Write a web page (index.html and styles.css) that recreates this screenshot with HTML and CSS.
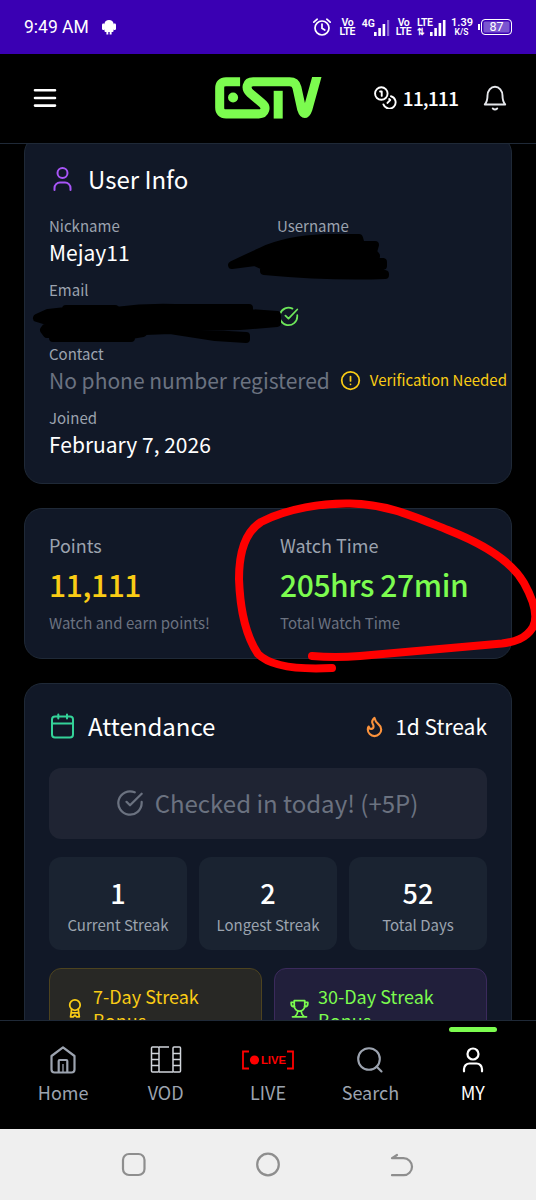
FILE: index.html
```
<!DOCTYPE html>
<html lang="en">
<head>
    <meta charset="UTF-8">
    <meta name="viewport" content="width=device-width, initial-scale=1.0">
    <title>ESTV - My Page</title>
    <link rel="stylesheet" href="styles.css">
</head>
<body>
    <div class="phone">
        <!-- Status Bar -->
        <div class="status-bar">
            <span class="clock">9:49 AM</span>
            <svg class="android" width="14" height="16" viewBox="0 0 14 16" fill="#fff">
                <path d="M2.500 4.500Q3 1 7 1T11.500 4.500V12Q11.500 13 10.500 13H9.600V15.500H7.700V13H6.300V15.500H4.400V13H3.500Q2.500 13 2.500 12Z"/>
                <rect x="0" y="4.500" width="3" height="6.500" rx="1.200"/>
                <rect x="11" y="4.500" width="3" height="6.500" rx="1.200"/>
            </svg>
            <div class="status-icons">
                <svg class="alarm" width="20" height="20" viewBox="0 0 20 20" fill="none" stroke="#fff" stroke-width="1.700" stroke-linecap="round">
                    <circle cx="10" cy="11" r="7"/>
                    <path d="M10 7v4.300l2.800 1.700M1.800 5.200l3.400-3M18.200 5.200l-3.400-3"/>
                </svg>
                <span class="two-line volte">Vo<br>LTE</span>
                <span class="net">4G</span>
                <svg class="bars" width="17" height="17" viewBox="0 0 17 17" fill="#fff">
                    <rect x="1" y="13" width="2.600" height="4"/>
                    <rect x="5.300" y="9" width="2.600" height="8"/>
                    <rect x="9.600" y="5" width="2.600" height="12"/>
                    <rect x="14" y="1" width="2.200" height="16" opacity=".4"/>
                </svg>
                <span class="two-line volte second">Vo<br>LTE</span>
                <span class="two-line lte">LTE<br><small>⇅</small></span>
                <svg class="bars tight" width="17" height="17" viewBox="0 0 17 17" fill="#fff">
                    <rect x="1" y="13" width="2.600" height="4"/>
                    <rect x="5.300" y="9" width="2.600" height="8"/>
                    <rect x="9.600" y="4" width="2.600" height="13"/>
                    <rect x="13.900" y="1" width="2.600" height="16"/>
                </svg>
                <span class="two-line speed">1.39<br><small>K/S</small></span>
                <span class="battery">87</span>
            </div>
        </div>

        <!-- Header -->
        <header class="header">
            <svg class="menu" width="24" height="20" viewBox="0 0 24 20" stroke="#fff" stroke-width="2.600" stroke-linecap="round">
                <path d="M2 2.300h20M2 10h20M2 17.600h20"/>
            </svg>
            <svg class="logo" width="107" height="42" viewBox="43 37 320 125" fill="none" stroke="#7cfc4f" stroke-width="27" role="img" aria-label="ESTV">
                <path d="M118 51H76Q57 51 57 70V128Q57 147 76 147H174C193 147 199 127 184 115L149 86C132 70 138 51 157 51H266Q284 51 288 68L302 132Q311 160 321 132L351 24"/>
                <path d="M232 78V161"/>
                <circle cx="97" cy="98" r="15" fill="#7cfc4f" stroke="none"/>
            </svg>
            <div class="header-right">
                <svg class="coins" width="23" height="23" viewBox="0 0 22 22" fill="none" stroke="#fff" stroke-width="1.800" stroke-linecap="round" stroke-linejoin="round">
                    <circle cx="7" cy="7.200" r="6"/>
                    <path d="M16.200 9.800a6 6 0 1 1-7.200 7.800M5.800 5.200h1.600v4.300M14.500 12.500l1 .900-2.600 2.800"/>
                </svg>
                <span class="balance">11,111</span>
                <svg class="bell" width="24" height="26" viewBox="0 0 24 26" fill="none" stroke="#e5e7eb" stroke-width="1.900" stroke-linecap="round" stroke-linejoin="round">
                    <path d="M1.800 19.500C4 17 4.500 14.500 4.500 10.500a7.500 8.800 0 0 1 15 0C19.500 14.500 20 17 22.200 19.500Z"/>
                    <path d="M9.800 23.500q2.200 2 4.400 0"/>
                </svg>
            </div>
        </header>

        <main class="content">
            <!-- User Info -->
            <section class="card user-card">
                <div class="card-head">
                    <svg class="head-icon" width="26" height="26" viewBox="0 0 26 26" fill="none" stroke="#a855f7" stroke-width="2" stroke-linecap="round">
                        <circle cx="13.500" cy="7" r="5"/>
                        <path d="M5.500 24v-2a5.500 5.500 0 0 1 5.500-5.500h5a5.500 5.500 0 0 1 5.500 5.500v2"/>
                    </svg>
                    <h2>User Info</h2>
                </div>
                <div class="info-grid">
                    <div class="field">
                        <div class="label">Nickname</div>
                        <div class="value">Mejay11</div>
                    </div>
                    <div class="field">
                        <div class="label">Username</div>
                        <div class="value"></div>
                    </div>
                    <div class="field wide">
                        <div class="label">Email</div>
                        <div class="value email">
                            <svg width="21" height="21" viewBox="0 0 24 24" fill="none" stroke="#6ee75a" stroke-width="2" stroke-linecap="round" stroke-linejoin="round">
                                <path d="M22 10.500V12A10 10 0 1 1 16.500 3M8.500 11l3.500 3.500L22 4"/>
                            </svg>
                        </div>
                    </div>
                    <div class="field wide">
                        <div class="label">Contact</div>
                        <div class="value contact">
                            <span class="muted">No phone number registered</span>
                            <svg width="21" height="21" viewBox="0 0 24 24" fill="none" stroke="#facc15" stroke-width="2" stroke-linecap="round">
                                <circle cx="12" cy="12" r="10"/>
                                <path d="M12 7.500v5M12 16.300v.1"/>
                            </svg>
                            <span class="verify">Verification Needed</span>
                        </div>
                    </div>
                    <div class="field wide">
                        <div class="label">Joined</div>
                        <div class="value">February 7, 2026</div>
                    </div>
                </div>
            </section>

            <!-- Points and Watch Time -->
            <section class="card totals">
                <div>
                    <div class="total-label">Points</div>
                    <div class="total-value yellow">11,111</div>
                    <div class="total-note">Watch and earn points!</div>
                </div>
                <div>
                    <div class="total-label">Watch Time</div>
                    <div class="total-value green">205hrs 27min</div>
                    <div class="total-note">Total Watch Time</div>
                </div>
            </section>

            <!-- Attendance -->
            <section class="card attendance">
                <div class="card-head">
                    <svg class="head-icon" width="26" height="26" viewBox="0 0 26 26" fill="none" stroke="#34d399" stroke-width="2" stroke-linecap="round">
                        <rect x="3" y="3.500" width="21" height="21" rx="3"/>
                        <path d="M3 10.500h21M9.300 1.500v4M18 1.500v4"/>
                    </svg>
                    <h2>Attendance</h2>
                    <svg class="flame" width="23" height="23" viewBox="0 0 24 24" fill="none" stroke="#fb923c" stroke-width="2.200" stroke-linecap="round" stroke-linejoin="round">
                        <path d="M8.500 14.500A2.500 2.500 0 0 0 11 12c0-1.380-.5-2-1-3-1.072-2.143-.224-4.054 2-6 .5 2.500 2 4.900 4 6.500 2 1.600 3 3.500 3 5.500a7 7 0 1 1-14 0c0-1.153.433-2.294 1-3a2.500 2.500 0 0 0 2.500 2.500z"/>
                    </svg>
                    <span class="streak">1d Streak</span>
                </div>
                <button class="checkin" disabled>
                    <svg width="28" height="28" viewBox="0 0 24 24" fill="none" stroke="#6b7280" stroke-width="1.900" stroke-linecap="round" stroke-linejoin="round">
                        <path d="M22 11.080V12a10 10 0 1 1-5.930-9.140M9 11l3 3L22 4"/>
                    </svg>
                    Checked in today! (+5P)
                </button>
                <div class="stats">
                    <div class="stat"><b>1</b><span>Current Streak</span></div>
                    <div class="stat"><b>2</b><span>Longest Streak</span></div>
                    <div class="stat"><b>52</b><span>Total Days</span></div>
                </div>
                <div class="bonuses">
                    <div class="bonus gold">
                        <svg width="21" height="21" viewBox="0 0 24 24" fill="none" stroke="#facc15" stroke-width="2" stroke-linecap="round" stroke-linejoin="round">
                            <circle cx="12.500" cy="8" r="6"/>
                            <path d="M8.700 13L7.500 21.500h3l2-2 2 2h3L16.300 13M8.500 17h8"/>
                        </svg>
                        <span>7-Day Streak Bonus</span>
                    </div>
                    <div class="bonus violet">
                        <svg width="21" height="21" viewBox="0 0 24 24" fill="none" stroke="#7cfc4f" stroke-width="2" stroke-linecap="round" stroke-linejoin="round">
                            <path d="M6 3h12v6a6 6 0 0 1-12 0zM6 5H2.500v1.500Q2.500 10 6.500 10M18 5h3.500v1.500Q21.500 10 17.500 10M10 15q0 3-3 6M14 15q0 3 3 6M4 21.500h16"/>
                        </svg>
                        <span>30-Day Streak Bonus</span>
                    </div>
                </div>
            </section>
        </main>

        <!-- Bottom Navigation -->
        <nav class="tabs">
            <a class="tab">
                <svg width="30" height="30" viewBox="0 0 30 30" fill="none" stroke="#9ca3af" stroke-width="2.200" stroke-linejoin="round">
                    <path d="M3.500 11L15 2.300 26.500 11V24.500Q26.500 27.500 23.500 27.500H6.500Q3.500 27.500 3.500 24.500ZM10.700 27V16Q10.700 15 11.700 15H18.300Q19.300 15 19.300 16V27"/>
                    <path d="M15 19v8" stroke-width="1.300"/>
                </svg>
                <span>Home</span>
            </a>
            <a class="tab">
                <svg width="32" height="30" viewBox="0 0 32 30" fill="none" stroke="#d1d5db" stroke-width="1.500">
                    <rect x="1.500" y="2" width="7.500" height="25" rx="1"/>
                    <rect x="23" y="2" width="7.500" height="25" rx="1"/>
                    <path d="M9 2h10M9 27h14M1.500 8.500h7.500M1.500 14.500h7.500M1.500 20.500h7.500M23 8.500h7.500M23 14.500h7.500M23 20.500h7.500"/>
                </svg>
                <span>VOD</span>
            </a>
            <a class="tab">
                <svg class="live" width="54" height="30" viewBox="0 0 54 30">
                    <path d="M8 6.500H2V23.500H8M46 6.500h6V23.500H46" fill="none" stroke="#ff0000" stroke-width="1.800"/>
                    <circle cx="13.500" cy="15" r="4.600" fill="#ff0000"/>
                    <text x="20" y="19" textLength="25" lengthAdjust="spacingAndGlyphs">LIVE</text>
                </svg>
                <span>LIVE</span>
            </a>
            <a class="tab">
                <svg width="30" height="30" viewBox="0 0 30 30" fill="none" stroke="#9ca3af" stroke-width="2.100" stroke-linecap="round">
                    <circle cx="14" cy="14" r="10.800"/>
                    <path d="M21.500 21.500l5 5"/>
                </svg>
                <span>Search</span>
            </a>
            <a class="tab active">
                <svg width="30" height="30" viewBox="0 0 30 30" fill="none" stroke="#fff" stroke-width="2.200" stroke-linecap="round">
                    <circle cx="15" cy="9" r="5.500"/>
                    <path d="M6 26.300V24a5.500 5.500 0 0 1 5.500-5.500h7A5.500 5.500 0 0 1 24 24v2.300"/>
                </svg>
                <span>MY</span>
            </a>
        </nav>

        <!-- System Buttons -->
        <div class="system-bar">
            <svg width="26" height="26" viewBox="0 0 26 26"><rect x="2" y="2" width="21.500" height="21" rx="6"/></svg>
            <svg width="26" height="26" viewBox="0 0 26 26"><circle cx="13" cy="12.500" r="10.800"/></svg>
            <svg width="26" height="26" viewBox="0 0 26 26"><path d="M3 6.200H14.500a8 8 0 0 1 0 17H3M3 6.200L8 3"/></svg>
        </div>

        <!-- Hand-drawn marks over the page -->
        <svg class="marks" width="536" height="1200" viewBox="0 0 536 1200" fill="none" stroke-linecap="round" stroke-linejoin="round">
            <g stroke="#000" stroke-width="8" fill="#000">
                <path d="M232 265L262 251Q285 240 325 238H359L361 245H375L373 252L376 256L375 261L383 262V266L370 270L385 274V275Q330 277 264 271V266L255 262Z"/>
                <path d="M37 318L48 313L66 311V309H115V311Q145 307 175 308L249 308V313L277 315V323L240 326L186 327L210 334L246 336V339L215 337L170 330L145 331L143 333L131 335V338H53V334H47L44 330L50 322Z"/>
            </g>
            <path d="M332 668Q275 671 258 654C246 636 240 608 239 579C239 553 245 532 261 522C288 508 323 503 350 503.500C388 504 415 517 448 530C486 545 512 562 524 583C534 601 538 617 533 627C526 639 514 642 502 643.500L360 656Q335 658 312 656" stroke="#ff0000" stroke-width="8"/>
        </svg>
    </div>
</body>
</html>
```
FILE: styles.css
```
* {
    box-sizing: border-box;
}

body {
    margin: 0;
    background: #000;
    color: #fff;
    font-family: "Noto Sans CJK KR", "Noto Sans", sans-serif;
}

svg {
    flex-shrink: 0;
}

.phone {
    position: relative;
    width: 536px;
    height: 1200px;
    overflow: hidden;
    display: flex;
    flex-direction: column;
}

/* Status bar */
.status-bar {
    height: 54px;
    flex-shrink: 0;
    background: #3a00b3;
    display: flex;
    align-items: center;
    padding: 0 24px;
    font-family: Roboto, sans-serif;
}

.clock {
    font-size: 17.5px;
    width: 66px;
    white-space: nowrap;
}

.android {
    margin-left: 12px;
}

.status-icons {
    margin-left: auto;
    display: flex;
    align-items: center;
}

.two-line {
    font-size: 10.5px;
    line-height: 9px;
    font-weight: 600;
    text-align: center;
    white-space: nowrap;
}

.two-line small {
    font-size: 8.5px;
}

.volte {
    margin-left: 7px;
    width: 17px;
    letter-spacing: -0.4px;
}

.volte.second {
    margin-left: 5px;
}

.net {
    font-size: 10.5px;
    font-weight: 600;
    margin: 0 -2px 8px 6px;
}

.lte {
    margin-left: 5px;
    text-align: left;
    width: 17px;
    letter-spacing: -0.4px;
}

.bars.tight {
    margin-left: -5px;
}

.speed {
    margin-left: 5px;
    width: 21px;
    font-size: 11px;
}

.battery {
    position: relative;
    margin-left: 9px;
    width: 31px;
    height: 16px;
    border: 1.5px solid #fff;
    border-radius: 4px;
    background: #7a55d0;
    box-shadow: inset 0 0 0 1.5px #3a00b3;
    font-size: 12.5px;
    line-height: 14px;
    text-align: center;
}

.battery::before {
    content: "";
    position: absolute;
    left: -4px;
    top: 4px;
    width: 2px;
    height: 6px;
    background: #fff;
}

/* Header */
.header {
    height: 90px;
    flex-shrink: 0;
    display: grid;
    grid-template-columns: 1fr 107px 1fr;
    align-items: center;
    padding: 0 29px 2px 33px;
    border-bottom: 1px solid #1f2937;
}

.logo {
    margin-left: -2px;
}

.header-right {
    display: flex;
    align-items: center;
    justify-content: flex-end;
}

.balance {
    margin: 0 25px 0 6px;
    font-size: 19.5px;
    font-weight: 500;
    line-height: 28px;
    letter-spacing: -1px;
}

/* Cards */
.content {
    flex: 1;
    min-height: 0;
    overflow: hidden;
    padding: 0 24px;
}

.card {
    border: 1px solid #1f2937;
    border-radius: 18px;
    background: #111827;
    padding: 24px;
    margin-bottom: 24px;
}

.user-card {
    margin-top: -9px;
}

.card-head {
    display: flex;
    align-items: center;
    height: 38px;
}

.card-head h2 {
    margin: 0 0 0 13px;
    font-size: 24px;
    font-weight: 400;
    line-height: 38px;
}

.info-grid {
    display: grid;
    grid-template-columns: 1fr 1fr;
    gap: 12px 18px;
    margin-top: 17px;
}

.wide {
    grid-column: span 2;
}

.label {
    font-size: 15px;
    line-height: 22px;
    color: #9ca3af;
}

.value {
    height: 30px;
    font-size: 21px;
    line-height: 30px;
    white-space: nowrap;
}

.email,
.contact {
    display: flex;
    align-items: center;
}

.email {
    padding-left: 229px;
}

.muted {
    color: #6b7280;
    margin-right: 10px;
}

.verify {
    margin-left: 9px;
    font-size: 15px;
    color: #facc15;
}

/* Points and watch time */
.totals {
    display: grid;
    grid-template-columns: 1fr 1fr;
    gap: 24px;
    height: 151px;
    padding-top: 23px;
}

.total-label {
    font-size: 18px;
    line-height: 27px;
    color: #9ca3af;
}

.total-value {
    margin-top: 5px;
    font-size: 30px;
    font-weight: 500;
    line-height: 40px;
    letter-spacing: -0.4px;
    white-space: nowrap;
}

.total-note {
    margin-top: 8px;
    font-size: 15px;
    line-height: 22px;
    color: #6b7280;
}

.yellow {
    color: #facc15;
}

.green {
    color: #7cfc4f;
}

/* Attendance */
.attendance {
    padding-top: 23px;
}

.flame {
    margin-left: auto;
}

.streak {
    margin-left: 9px;
    font-size: 21px;
    line-height: 30px;
}

.checkin {
    width: 100%;
    height: 71px;
    margin-top: 23px;
    padding: 0 6px 2px;
    border: none;
    border-radius: 12px;
    background: #1f2433;
    color: #6b7280;
    font-family: inherit;
    font-size: 24px;
    display: flex;
    align-items: center;
    justify-content: center;
    gap: 11px;
}

.checkin svg {
    margin-left: -2px;
}

.stats {
    display: grid;
    grid-template-columns: repeat(3, 1fr);
    gap: 12px;
    margin-top: 18px;
}

.stat {
    height: 93px;
    border-radius: 12px;
    background: #1a2331;
    padding-top: 17px;
    text-align: center;
}

.stat b {
    display: block;
    font-size: 27px;
    font-weight: 500;
    line-height: 38px;
}

.stat span {
    display: block;
    margin-top: 1px;
    font-size: 15px;
    line-height: 24px;
    color: #9ca3af;
}

.bonuses {
    display: grid;
    grid-template-columns: 1fr 1fr;
    gap: 12px;
    margin-top: 18px;
}

.bonus {
    display: flex;
    align-items: center;
    gap: 8px;
    height: 80px;
    padding: 0 14px;
    border: 1px solid;
    border-radius: 12px;
    font-size: 18px;
    line-height: 24px;
}

.gold {
    background: #282825;
    border-color: #4d431f;
    color: #facc15;
}

.violet {
    background: #211f3b;
    border-color: #3b2a5c;
    color: #7cfc4f;
}

/* Bottom navigation */
.tabs {
    height: 109px;
    flex-shrink: 0;
    display: grid;
    grid-template-columns: repeat(5, 1fr);
    padding: 0 12px;
    border-top: 1px solid #1f2937;
    background: #000;
}

.tab {
    position: relative;
    display: flex;
    flex-direction: column;
    align-items: center;
    padding-top: 24px;
    color: #9ca3af;
    font-size: 18px;
    line-height: 26px;
}

.tab span {
    margin-top: 4px;
}

.tab.active {
    color: #fff;
}

.tab.active::before {
    content: "";
    position: absolute;
    top: 6px;
    width: 48px;
    height: 5px;
    border-radius: 3px;
    background: #7cfc4f;
}

.live text {
    font-family: "Liberation Sans", sans-serif;
    font-size: 11.5px;
    font-weight: 700;
    fill: #ff0000;
}

/* System buttons */
.system-bar {
    height: 71px;
    flex-shrink: 0;
    display: flex;
    align-items: center;
    justify-content: center;
    gap: 108px;
    background: #efefef;
}

.system-bar svg {
    fill: none;
    stroke: #8e8e8e;
    stroke-width: 2.2;
    stroke-linecap: round;
}

/* Marker strokes */
.marks {
    position: absolute;
    left: 0;
    top: 0;
}
```
